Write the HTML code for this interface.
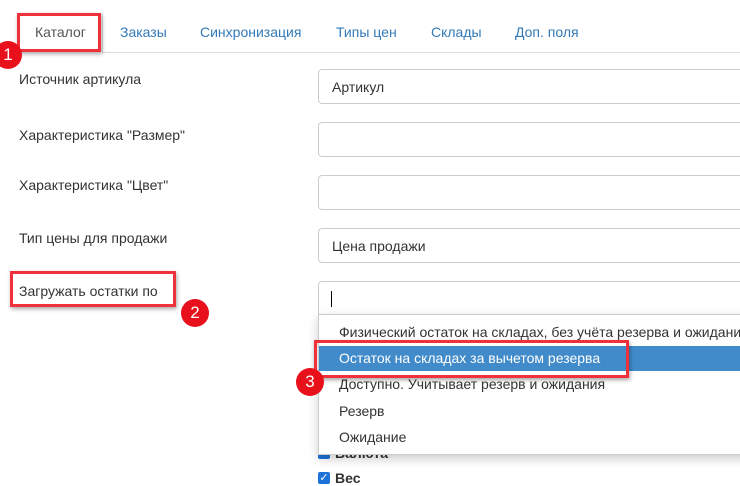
<!DOCTYPE html>
<html><head><meta charset="utf-8"><style>
body{margin:0;width:740px;height:483px;overflow:hidden;background:#fff;font-family:"Liberation Sans",Arial,sans-serif;font-size:14px;color:#333;position:relative}
.a{position:absolute}
.tab{position:absolute;top:24px;color:#337ab7;font-size:14px}
.line{position:absolute;left:0;right:0;top:52px;border-top:1px solid #ddd}
.in{position:absolute;left:318px;width:440px;height:33px;border:1px solid #ccc;border-radius:4px;background:#fff}
.lbl{position:absolute;left:19px;font-size:14px;color:#333}
.red{position:absolute;border:3px solid #f0303a;box-shadow:1px 2px 4px rgba(0,0,0,.35)}
.badge{position:absolute;width:28px;height:28px;border-radius:50%;background:#e8101b;color:#fff;font-size:17px;text-align:center;line-height:28px}
.dd{position:absolute;left:318px;top:314px;width:440px;height:139px;border:1px solid #ccc;background:#fff;box-shadow:0 4px 10px rgba(0,0,0,.2)}
.opt{position:absolute;left:20px;font-size:14px;color:#333}
.cb{position:absolute;left:318px;width:12px;height:12px;background:#1e73d8;border-radius:2px;color:#fff;font-size:11px;line-height:12px;text-align:center}
</style></head><body>
<div class="line"></div>
<div class="a" style="left:19px;top:13px;width:82px;height:39px;border:1px solid #ddd;border-bottom:1px solid #fff;background:#fff;border-radius:4px 4px 0 0"></div>
<div class="tab" style="left:35px;color:#555">Каталог</div>
<div class="tab" style="left:120px">Заказы</div>
<div class="tab" style="left:200px">Синхронизация</div>
<div class="tab" style="left:336px">Типы цен</div>
<div class="tab" style="left:431px">Склады</div>
<div class="tab" style="left:515px">Доп. поля</div>
<div class="red" style="left:17px;top:13px;width:78px;height:33px"></div>
<div class="badge" style="left:-6px;top:41px">1</div>

<div class="lbl" style="top:71px">Источник артикула</div>
<div class="in" style="top:69px"><span class="a" style="left:13px;top:9px">Артикул</span></div>
<div class="lbl" style="top:127px">Характеристика "Размер"</div>
<div class="in" style="top:122px"></div>
<div class="lbl" style="top:177px">Характеристика "Цвет"</div>
<div class="in" style="top:175px"></div>
<div class="lbl" style="top:230px">Тип цены для продажи</div>
<div class="in" style="top:228px"><span class="a" style="left:13px;top:9px">Цена продажи</span></div>
<div class="lbl" style="top:283px">Загружать остатки по</div>
<div class="in" style="top:281px;border-radius:4px 4px 0 0"><span class="a" style="left:12px;top:9px;width:1px;height:16px;background:#000"></span></div>
<div class="red" style="left:10px;top:271px;width:160px;height:30px"></div>
<div class="badge" style="left:181px;top:299px">2</div>

<div class="cb" style="top:447px">✓</div><div class="a" style="left:335px;top:445px;font-weight:bold">Валюта</div>
<div class="cb" style="top:472px">✓</div><div class="a" style="left:335px;top:470px;font-weight:bold">Вес</div>

<div class="dd">
<div class="opt" style="top:9px">Физический остаток на складах, без учёта резерва и ожидания</div>
<div class="a" style="left:0;top:31px;width:440px;height:25px;background:#428bca"></div>
<div class="opt" style="top:35px;color:#fff">Остаток на складах за вычетом резерва</div>
<div class="opt" style="top:61px">Доступно. Учитывает резерв и ожидания</div>
<div class="opt" style="top:88px">Резерв</div>
<div class="opt" style="top:114px">Ожидание</div>
</div>
<div class="red" style="left:314px;top:340px;width:309px;height:32px"></div>
<div class="badge" style="left:296px;top:368px">3</div>
</body></html>
